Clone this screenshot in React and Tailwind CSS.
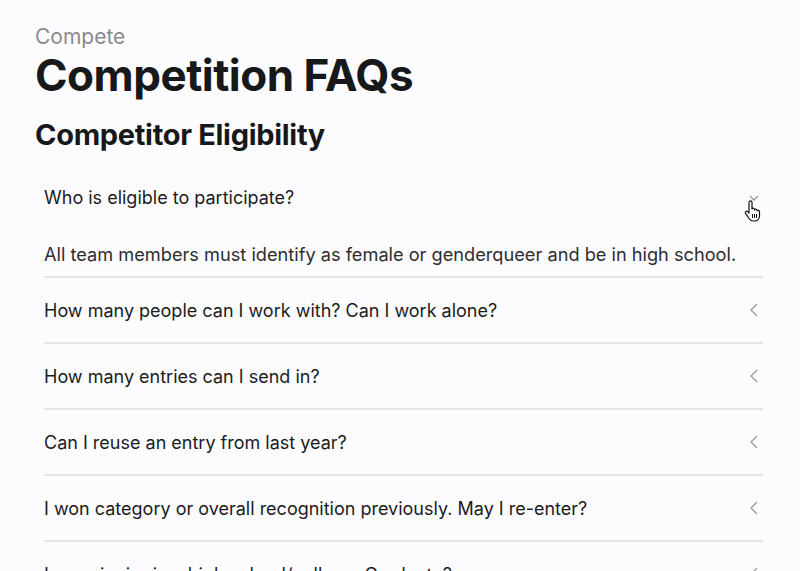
import React, { useState } from "react";

const faqs = [
  {
    q: "Who is eligible to participate?",
    a: "All team members must identify as female or genderqueer and be in high school.",
  },
  { q: "How many people can I work with? Can I work alone?", a: "" },
  { q: "How many entries can I send in?", a: "" },
  { q: "Can I reuse an entry from last year?", a: "" },
  { q: "I won category or overall recognition previously. May I re-enter?", a: "" },
  { q: "I am a junior in a high school/college. Graduate?", a: "" },
];

const Chevron = ({ open }) => (
  <svg width="10" height="16" viewBox="0 0 10 16" fill="none" stroke="#9a9a9e" strokeWidth="1.3">
    {open ? <path d="M1 7 L5 11 L9 7" /> : <path d="M8 2 L2 8 L8 14" />}
  </svg>
);

const App = () => {
  const [open, setOpen] = useState(0);

  return (
    <div className="min-h-screen bg-[#fcfbfd] px-[35px] pt-[24px] font-['Inter',sans-serif] overflow-hidden h-[571px]">
      <p className="text-[21px] leading-[26px] text-[#8b8b8e]">Compete</p>
      <h1 className="text-[44px] leading-[50px] font-bold text-[#17181a] tracking-[-0.5px]">
        Competition FAQs
      </h1>
      <h2 className="mt-[18px] text-[29px] leading-[34px] font-bold text-[#17181a] tracking-[-0.3px]">
        Competitor Eligibility
      </h2>

      <div className="ml-[9px] w-[719px] mt-[13px]">
        {faqs.map((f, i) => (
          <div key={i} className="border-b-2 border-[#e4e4e6]">
            <button
              onClick={() => setOpen(open === i ? -1 : i)}
              className="relative w-full h-[64px] flex items-center justify-between text-left pr-[4px]"
            >
              <span className="text-[18px] text-[#1b1b1d]">{f.q}</span>
              <Chevron open={open === i} />
              {i === 0 && (
                <svg
                  className="absolute right-[1px] top-[35px]"
                  width="18"
                  height="22"
                  viewBox="0 0 18 22"
                >
                  <path
                    d="M5 2.5c0-1 .7-1.6 1.5-1.6S8 1.5 8 2.5V9c.3-.7 1-1 1.6-.8.6.2 1 .7 1 1.3v.4c.3-.6 1-.9 1.6-.7.6.2.9.7.9 1.3v.5c.3-.5.9-.8 1.5-.6.6.2.9.8.9 1.4V16c0 2.8-2.2 5-5 5H9.3c-1.6 0-3-.8-3.9-2L1.6 13.4c-.5-.7-.3-1.6.4-2 .6-.4 1.4-.2 1.9.3L5 13V2.5z"
                    fill="#fff"
                    stroke="#111"
                    strokeWidth="1.2"
                    strokeLinejoin="round"
                  />
                  <path d="M8.5 14v4M10.5 14v4M12.5 14v4" stroke="#111" strokeWidth="1" />
                </svg>
              )}
            </button>
            {open === i && f.a && (
              <p className="text-[18.2px] leading-[28px] text-[#2e2e31] pt-[11px] pb-[8px]">{f.a}</p>
            )}
          </div>
        ))}
      </div>
    </div>
  );
};

export default App;
